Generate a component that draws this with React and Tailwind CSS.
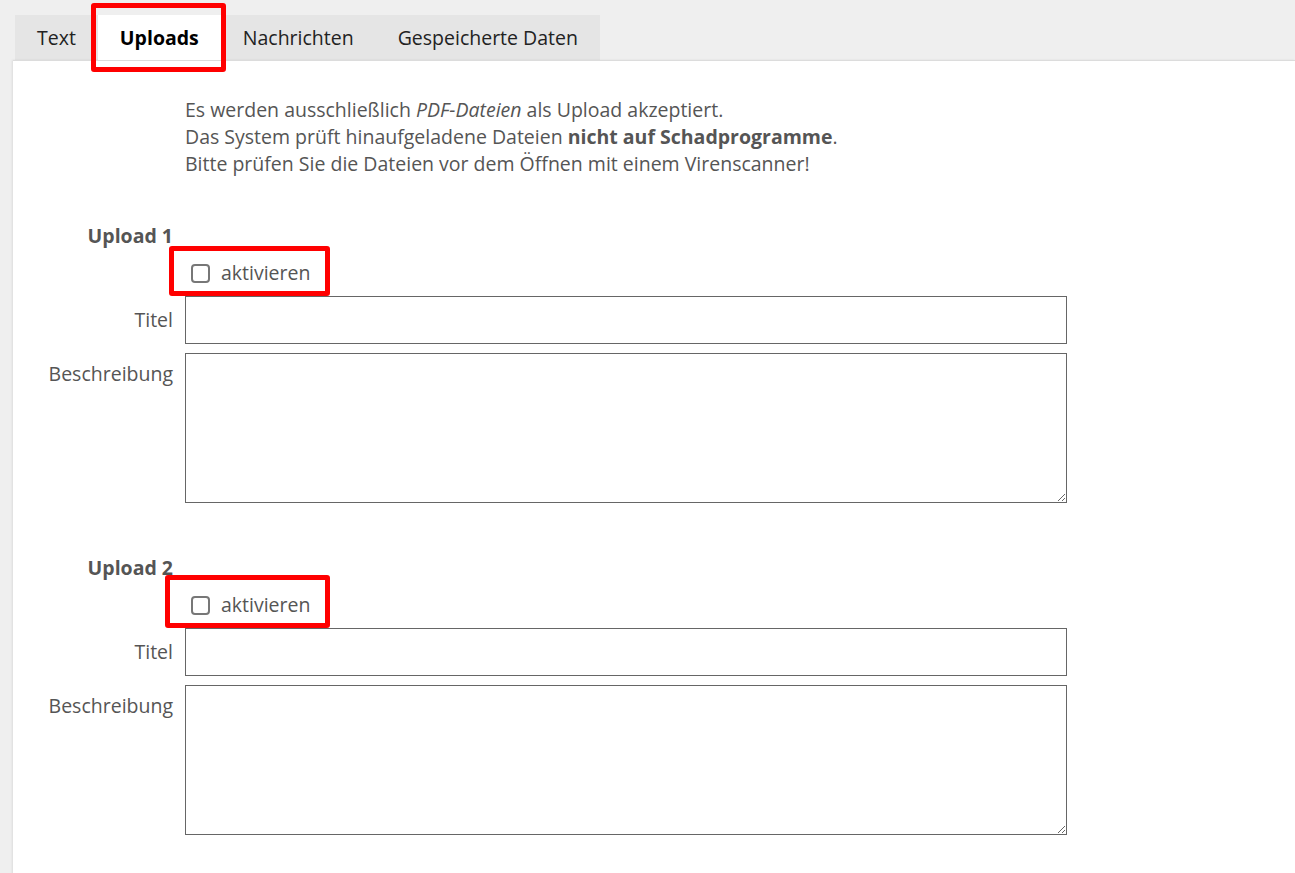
import React from 'react'

function UploadBlock({ n, box }) {
  return (
    <div className="mb-[51px]">
      <div className="flex">
        <div className="w-[160px] text-right font-bold text-[19.5px] leading-[27px]">Upload {n}</div>
      </div>
      <div className="flex mt-[11px]">
        <div className="w-[172px] shrink-0" />
        <div className="relative flex items-center h-[26px]">
          <span className="ml-[6px] w-[19px] h-[19px] rounded-[4px] border-2 border-[#777] bg-white" />
          <span className="ml-[11px] text-[19.5px] leading-[26px]">aktivieren</span>
          <span className={box} />
        </div>
      </div>
      <div className="flex mt-[10px] items-start">
        <label className="w-[160px] text-right text-[19.5px] leading-[27px] pt-[10px] shrink-0">Titel</label>
        <input className="ml-[12px] w-[882px] h-[48px] border border-[#666] bg-white outline-none" />
      </div>
      <div className="flex mt-[9px] items-start">
        <label className="w-[160px] text-right text-[19.5px] leading-[27px] pt-[7px] shrink-0">Beschreibung</label>
        <textarea className="ml-[12px] w-[882px] h-[150px] border border-[#666] bg-white outline-none resize-y" />
      </div>
    </div>
  )
}

export default function App() {
  const tabs = ['Text', 'Uploads', 'Nachrichten', 'Gespeicherte Daten']
  return (
    <div className="h-[873px] bg-[#efefef] text-[#555] font-['Open_Sans',sans-serif] overflow-hidden">
      <div className="pt-[15px] pl-[15px]">
        <div className="flex h-[45px] w-fit bg-[#e5e5e5]">
          {tabs.map((t) => (
            <div
              key={t}
              className={
                t === 'Uploads'
                  ? 'relative px-[22px] flex items-center bg-white text-black font-bold text-[19.5px]'
                  : 'px-[22px] flex items-center text-[#222] text-[19.5px]'
              }
            >
              {t}
              {t === 'Uploads' && (
                <span className="absolute -left-[7px] -top-[12px] w-[135px] h-[69px] border-[5px] border-[#ff0000] rounded-[3px]" />
              )}
            </div>
          ))}
        </div>
      </div>
      <div className="ml-[13px] bg-white border-t border-[#dcdcdc] shadow-[-1px_0_2px_rgba(0,0,0,0.08)] pt-[35px] pb-[40px]">
        <div className="pl-[172px] text-[19.5px] leading-[27px]">
          <p>Es werden ausschließlich <em>PDF-Dateien</em> als Upload akzeptiert.</p>
          <p>Das System prüft hinaufgeladene Dateien <strong>nicht auf Schadprogramme</strong>.</p>
          <p>Bitte prüfen Sie die Dateien vor dem Öffnen mit einem Virenscanner!</p>
        </div>
        <div className="mt-[45px]">
          <UploadBlock
            n={1}
            box="absolute -left-[16px] -top-[14px] w-[161px] h-[50px] border-[5px] border-[#ff0000] rounded-[3px]"
          />
          <UploadBlock
            n={2}
            box="absolute -left-[20px] -top-[17px] w-[165px] h-[53px] border-[5px] border-[#ff0000] rounded-[3px]"
          />
        </div>
      </div>
    </div>
  )
}
